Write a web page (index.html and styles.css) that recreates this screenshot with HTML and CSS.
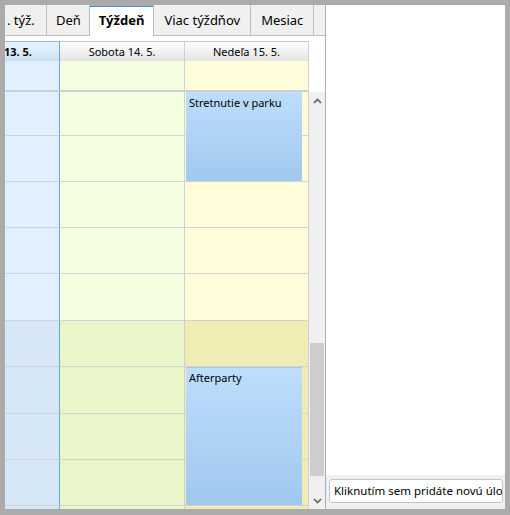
FILE: index.html
```html
<!DOCTYPE html>
<html lang="sk">
<head>
<meta charset="utf-8">
<title>Kalendár</title>
<link rel="stylesheet" href="styles.css">
</head>
<body>
<div class="window">
  <div class="cal">
    <div class="tabs">
      <div class="tab tab-first">. týž.</div>
      <div class="tab tab-den">Deň</div>
      <div class="tab tab-sel">Týždeň</div>
      <div class="tab">Viac týždňov</div>
      <div class="tab">Mesiac</div>
      <div class="tab tab-rest"></div>
    </div>
    <div class="top">
      <div class="hrow">
        <div class="hcell c1 today">13. 5.</div>
        <div class="hcell c2">Sobota 14. 5.</div>
        <div class="hcell c3">Nedeľa 15. 5.</div>
        <div class="hspacer"></div>
      </div>
      <div class="arow">
        <div class="acell c1"></div>
        <div class="acell c2"></div>
        <div class="acell c3"></div>
        <div class="hspacer"></div>
      </div>
      <div class="thick"></div>
    </div>
    <div class="body">
      <div class="slots">
        <div class="row r44"><div class="s c1"></div><div class="s c2"></div><div class="s c3"></div></div>
        <div class="row"><div class="s c1"></div><div class="s c2"></div><div class="s c3"></div></div>
        <div class="row"><div class="s c1"></div><div class="s c2"></div><div class="s c3"></div></div>
        <div class="row"><div class="s c1"></div><div class="s c2"></div><div class="s c3"></div></div>
        <div class="row r47"><div class="s c1"></div><div class="s c2"></div><div class="s c3"></div></div>
        <div class="row dark"><div class="s c1"></div><div class="s c2"></div><div class="s c3"></div></div>
        <div class="row dark r47"><div class="s c1"></div><div class="s c2"></div><div class="s c3"></div></div>
        <div class="row dark"><div class="s c1"></div><div class="s c2"></div><div class="s c3"></div></div>
        <div class="row dark"><div class="s c1"></div><div class="s c2"></div><div class="s c3"></div></div>
        <div class="row dark"><div class="s c1"></div><div class="s c2"></div><div class="s c3"></div></div>
        <div class="event ev1">Stretnutie v parku</div>
        <div class="event ev2">Afterparty</div>
      </div>
      <div class="sb">
        <div class="sb-btn"><svg width="9" height="6" viewBox="0 0 9 6"><path d="M1 5 L4.5 1.5 L8 5" fill="none" stroke="#606060" stroke-width="1.6"/></svg></div>
        <div class="sb-track"><div class="sb-thumb"></div></div>
        <div class="sb-btn"><svg width="9" height="6" viewBox="0 0 9 6"><path d="M1 1 L4.5 4.5 L8 1" fill="none" stroke="#606060" stroke-width="1.6"/></svg></div>
      </div>
    </div>
  </div>
  <div class="side">
    <div class="side-list"></div>
    <div class="side-foot">
      <div class="addbtn">Kliknutím sem pridáte novú úlo</div>
    </div>
  </div>
</div>
</body>
</html>
```

FILE: styles.css
```css
html, body {
  margin: 0;
  padding: 0;
}
body {
  background: #ababab;
  font-family: "Noto Sans", "Open Sans", sans-serif;
  color: #000;
  width: 510px;
  height: 515px;
  overflow: hidden;
}
.window {
  margin: 5px;
  width: 500px;
  height: 504px;
  background: #fff;
  display: flex;
}
.cal {
  flex: none;
  width: 320px;
  border-right: 1px solid #a7b1bb;
  display: flex;
  flex-direction: column;
  overflow: hidden;
}
.tabs {
  display: flex;
  height: 31px;
  overflow: hidden;
  flex: none;
}
.tab {
  box-sizing: border-box;
  height: 31px;
  padding: 0 10px;
  background: #f0f0f0;
  border-right: 1px solid #bdbdbd;
  border-bottom: 1px solid #bdbdbd;
  font-size: 13px;
  line-height: 30px;
  white-space: nowrap;
  flex: none;
}
.tab-first {
  width: 42px;
  padding: 0 0 0 2px;
}
.tab-den {
  padding: 0 8px 0 9px;
}
.tab-sel {
  background: linear-gradient(#ababab 0 1px, #3d8fe0 1px 2px, #fff 2px);
  border-bottom-color: #fff;
  font-weight: bold;
  height: 32px;
  padding: 0 9px;
}
.tab-rest {
  flex: 1;
  padding: 0;
  border-right: none;
  border-left: 0;
}
.top {
  margin-top: 5px;
  flex: none;
}
.hrow, .arow {
  display: flex;
}
.hrow {
  height: 20px;
}
.hcell {
  box-sizing: border-box;
  height: 20px;
  border-top: 1px solid #cbcbcb;
  background: linear-gradient(#ffffff, #f2f2f2 45%, #e3e3e3);
  font-size: 11px;
  line-height: 19px;
  text-align: center;
  white-space: nowrap;
  overflow: hidden;
}
.c1 {
  flex: none;
  width: 55px;
  border-right: 1px solid #6ba4d6;
  box-sizing: border-box;
}
.c2 {
  flex: none;
  width: 125px;
  border-right: 1px solid #d0d0d0;
  box-sizing: border-box;
}
.c3 {
  flex: none;
  width: 124px;
  border-right: 1px solid #d0d0d0;
  box-sizing: border-box;
}
.hcell.today {
  background: linear-gradient(#e6f3ff, #dcedfc 50%, #cbdff2);
  border-top-color: #8db8df;
  font-weight: bold;
  text-align: left;
  padding-left: 0;
  text-indent: -1px;
}
.hspacer {
  flex: 1;
}
.acell {
  height: 29px;
}
.acell.c1 { background: #e0f0ff; }
.acell.c2 { background: #f4fee0; }
.acell.c3 { background: #fffcd9; }
.thick {
  height: 2px;
  width: 304px;
  background: #cfcfcf;
}
.body {
  flex: 1;
  display: flex;
  min-height: 0;
}
.slots {
  flex: none;
  position: relative;
  width: 304px;
  overflow: hidden;
}
.row {
  display: flex;
  height: 46px;
}
.row.r44 { height: 44px; }
.row.r47 { height: 47px; }
.s {
  border-bottom: 1px solid #d3d3d3;
}
.s.c1 { background: #e0f0ff; }
.s.c2 { background: #f4fee0; }
.s.c3 { background: #fffcd9; }
.dark .s.c1 { background: #d6e8f8; }
.dark .s.c2 { background: #e9f6ca; }
.dark .s.c3 { background: #f1ecb3; }
.event {
  position: absolute;
  left: 181px;
  width: 116px;
  box-sizing: border-box;
  padding: 2px 3px;
  background: linear-gradient(#bddefd, #a0c8ee);
  border-top: 1px solid #a4c8ec;
  font-size: 11px;
  line-height: 15px;
}
.ev1 {
  top: 0;
  height: 89px;
  border-top: none;
  padding-top: 3px;
}
.ev2 {
  top: 275px;
  height: 138px;
}
.sb {
  flex: none;
  width: 16px;
  background: #f0f0f0;
  display: flex;
  flex-direction: column;
}
.sb-btn {
  height: 17px;
  display: flex;
  align-items: center;
  justify-content: center;
  flex: none;
}
.sb-track {
  flex: 1;
  padding-top: 234px;
}
.sb-thumb {
  margin: 0 1px;
  height: 133px;
  background: #cdcdcd;
}
.side {
  flex: 1;
  min-width: 0;
  display: flex;
  flex-direction: column;
}
.side-list {
  flex: 1;
}
.side-foot {
  height: 34px;
  background: #f0f0f0;
  box-sizing: border-box;
  padding: 4px 2px 0 3px;
}
.addbtn {
  box-sizing: border-box;
  height: 24px;
  background: #fff;
  border: 1px solid #c3c3c3;
  border-radius: 3px;
  font-size: 11.5px;
  line-height: 22px;
  padding-left: 4px;
  white-space: nowrap;
  overflow: hidden;
}
```
